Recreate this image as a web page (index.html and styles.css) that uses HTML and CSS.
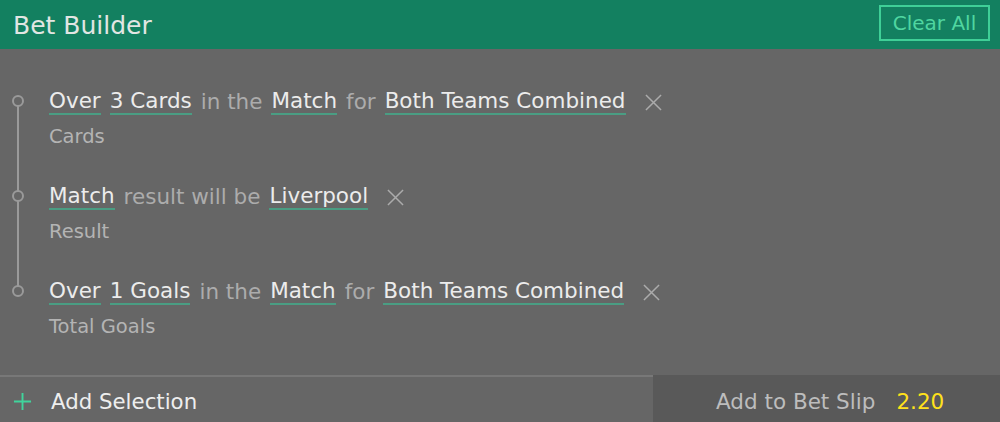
FILE: index.html
```html
<!DOCTYPE html>
<html>
<head>
<meta charset="utf-8">
<link rel="stylesheet" href="styles.css">
</head>
<body>
<div class="panel">
  <header class="head">
    <h1 class="title">Bet Builder</h1>
    <button class="clear">Clear All</button>
  </header>
  <main class="list">
    <div class="timeline"></div>
    <div class="item">
      <span class="dot"></span>
      <div class="txt">
        <div class="line"><u>Over</u> <u>3 Cards</u> <span class="g">in the</span> <u>Match</u> <span class="g">for</span> <u>Both Teams Combined</u>
          <svg class="x" viewBox="0 0 18 18"><path d="M1 1L17 17M17 1L1 17"/></svg></div>
        <div class="sub">Cards</div>
      </div>
    </div>
    <div class="item">
      <span class="dot"></span>
      <div class="txt">
        <div class="line"><u>Match</u> <span class="g">result will be</span> <u>Liverpool</u>
          <svg class="x" viewBox="0 0 18 18"><path d="M1 1L17 17M17 1L1 17"/></svg></div>
        <div class="sub">Result</div>
      </div>
    </div>
    <div class="item">
      <span class="dot"></span>
      <div class="txt">
        <div class="line"><u>Over</u> <u>1 Goals</u> <span class="g">in the</span> <u>Match</u> <span class="g">for</span> <u>Both Teams Combined</u>
          <svg class="x" viewBox="0 0 18 18"><path d="M1 1L17 17M17 1L1 17"/></svg></div>
        <div class="sub">Total Goals</div>
      </div>
    </div>
  </main>
  <footer class="foot">
    <div class="add">
      <svg class="plus" viewBox="0 0 20 20"><path d="M10 1V19M1 10H19"/></svg>
      <span>Add Selection</span>
    </div>
    <div class="slip"><span class="slip-l">Add to Bet Slip</span><span class="odds">2.20</span></div>
  </footer>
</div>
</body>
</html>
```
FILE: styles.css
```css
* { box-sizing: border-box; }
html, body { margin: 0; padding: 0; }
body {
  width: 1000px; height: 422px; overflow: hidden;
  background: #666666;
  font-family: "DejaVu Sans", Verdana, sans-serif;
}
.panel { display: flex; flex-direction: column; height: 422px; }
.head {
  height: 49px; background: #138060;
  display: flex; align-items: center; justify-content: space-between;
  padding: 1px 10px 0 13px;
}
.title {
  margin: 0; font-weight: normal; font-size: 25px; color: #e2e6e3;
}
.clear {
  background: transparent; border: 2px solid #3fcf97; color: #4fd6a0;
  font-family: inherit; font-size: 20px; height: 36px; width: 111px;
  padding: 0; margin-top: -4px;
}
.list {
  flex: 1; position: relative;
  display: flex; flex-direction: column;
  padding-top: 39px;
}
.timeline {
  position: absolute; left: 17px; top: 57px; width: 2px; height: 180px;
  background: #9a9a9a;
}
.item { display: flex; height: 95px; position: relative; flex-shrink: 0; }
.item:last-child { height: 60px; }
.dot {
  position: absolute; left: 12px; top: 7px;
  width: 12px; height: 12px; border: 2px solid #9a9a9a; border-radius: 50%;
  background: #666;
}
.txt { margin-left: 49px; }
.line {
  font-size: 21.5px; color: #ececec; line-height: 28px; white-space: nowrap;
  display: flex; align-items: center;
}
.line u {
  text-decoration: none; border-bottom: 2px solid #4a9d83;
  line-height: 24px; display: inline-block; margin-right: 9px;
}
.line .g { color: #acacac; margin-right: 9px; }
.x { width: 17px; height: 17px; margin-left: 10px; }
.x path { stroke: #ababab; stroke-width: 1.6; fill: none; }
.sub { font-size: 19.5px; color: #b4b4b4; margin-top: 9px; }
.foot {
  height: 47px; display: flex; flex-shrink: 0;
}
.add {
  flex: 1; border-top: 2px solid #787878;
  display: flex; align-items: center; padding: 3px 0 0 13px;
  font-size: 21.3px; color: #eeeeee;
}
.plus { width: 19px; height: 19px; margin-right: 19px; }
.plus path { stroke: #40d49c; stroke-width: 2; fill: none; }
.slip {
  width: 347px; background: #595959;
  display: flex; align-items: center; padding: 5px 0 0 63px;
  font-size: 21.5px;
}
.slip-l { color: #bdbdbd; margin-right: 21px; }
.odds { color: #ffe11b; }
```
